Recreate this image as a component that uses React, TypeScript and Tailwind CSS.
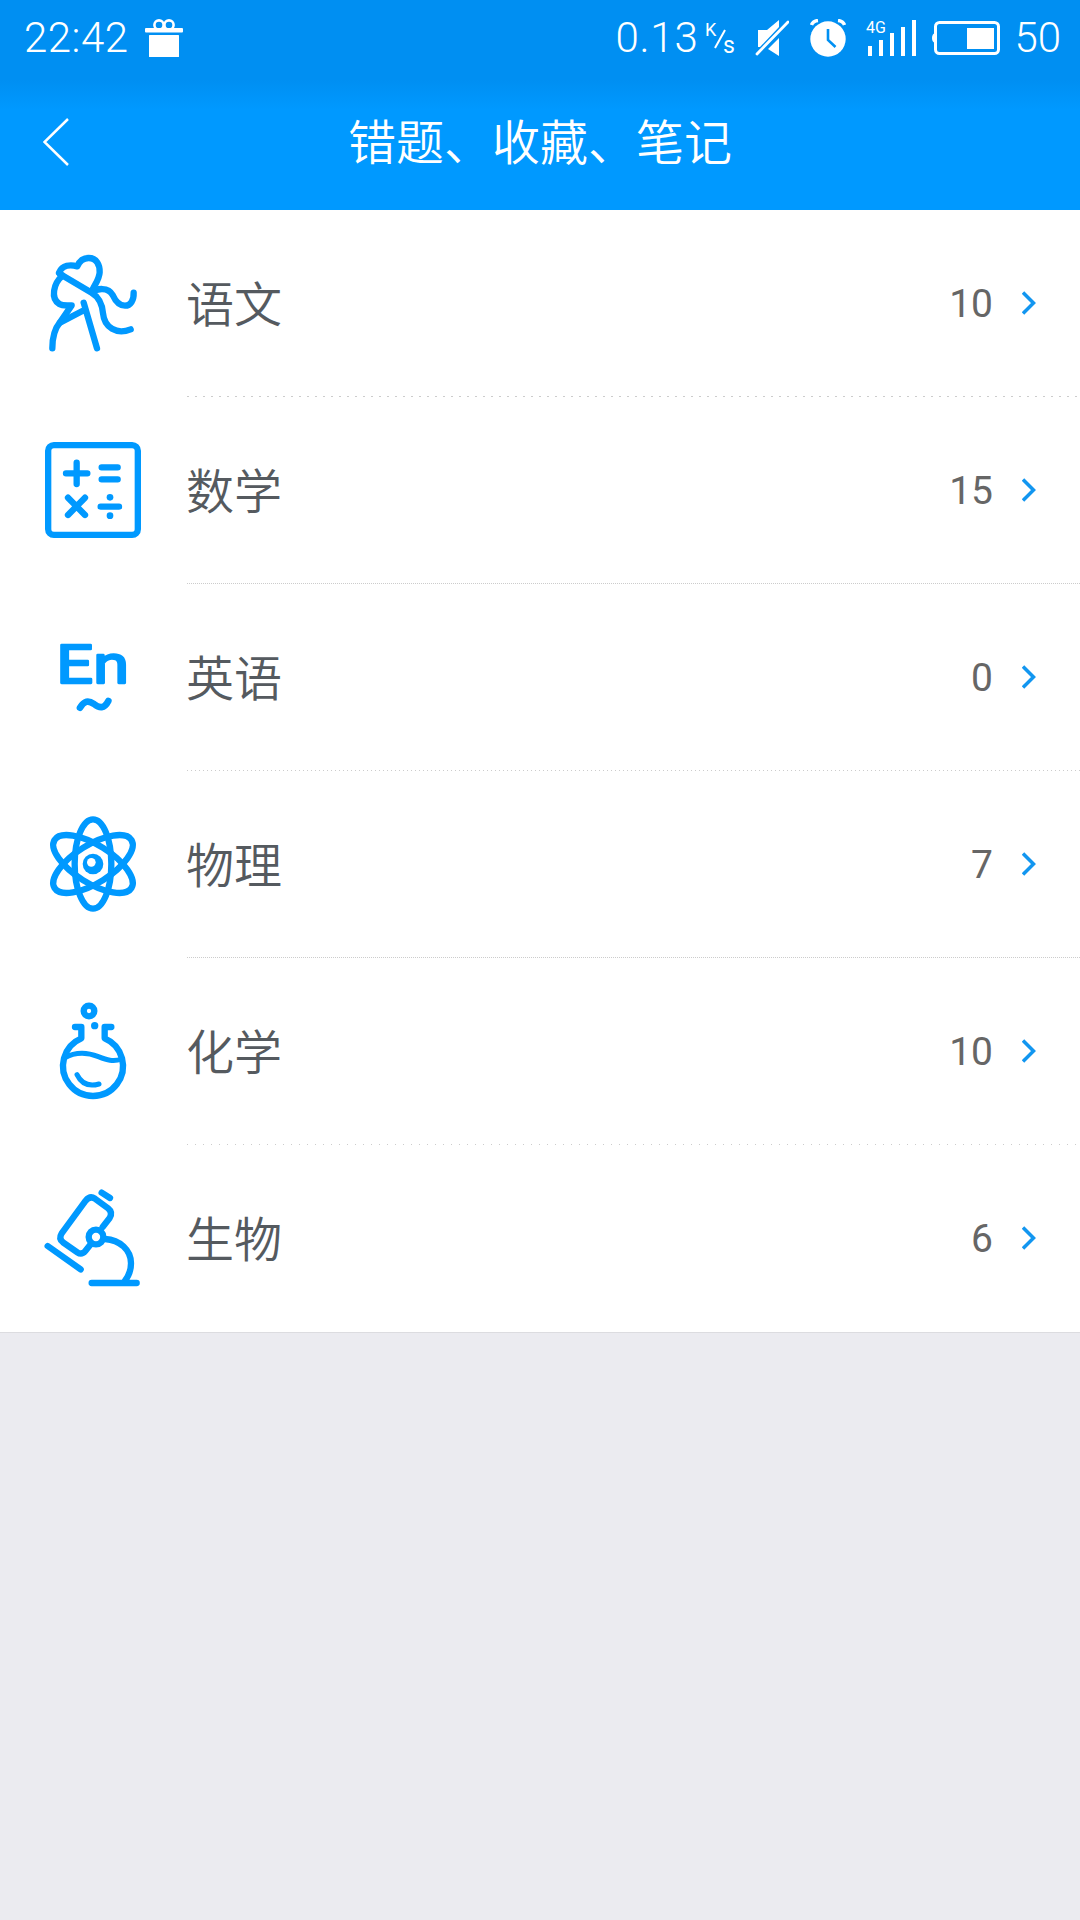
import type { ReactNode } from "react";

type Subject = {
  name: string;
  count: number;
  icon: ReactNode;
  divider: string;
};

const SubjectIcon = ({ children }: { children: ReactNode }) => (
  <svg
    viewBox="0 0 288 288"
    className="h-24 w-24 shrink-0 overflow-visible"
    fill="none"
    stroke="#0099ff"
    strokeWidth={19}
    strokeLinecap="round"
    strokeLinejoin="round"
  >
    {children}
  </svg>
);

const ChineseIcon = () => (
  <SubjectIcon>
    <path d="M42 53C52 30 76 28 97 34C105 15 118 9 131 9C155 9 165 30 164 52C163 72 150 88 143 103" />
    <path d="M45 57L140 113C165 128 172 150 174 175C178 218 215 240 257 223" />
    <path d="M140 112C155 100 190 95 203 120C212 140 222 152 240 152C257 152 267 135 266 113" />
    <path d="M53 62C25 85 16 130 43 147C53 153 68 151 80 151L45 202C30 220 22 250 22 280" />
    <path d="M45 203L118 165M116 143L156 280" />
  </SubjectIcon>
);

const MathIcon = () => (
  <SubjectIcon>
    <rect x="9.500" y="9.500" width="269" height="269" rx="17" />
    <path d="M63 94H127M95 62V126M170 76H218M170 112H218M69 167L120 219M120 167L69 219M167 194H222" />
    <g fill="#0099ff" stroke="none">
      <circle cx="195" cy="166" r="10" />
      <circle cx="195" cy="221" r="10" />
    </g>
  </SubjectIcon>
);

const EnglishIcon = () => (
  <SubjectIcon>
    <text
      x="34"
      y="161"
      textLength="218"
      lengthAdjust="spacingAndGlyphs"
      fill="#0099ff"
      strokeWidth={7}
      className="font-['Roboto',sans-serif] text-[162px] font-normal"
    >
      En
    </text>
    <path d="M105 236C118 215 130 213 147 225C163 238 178 240 190 216" strokeWidth={20} />
  </SubjectIcon>
);

const PhysicsIcon = () => (
  <SubjectIcon>
    <ellipse cx="144" cy="144" rx="55" ry="134" />
    <ellipse cx="144" cy="144" rx="57" ry="136" transform="rotate(58 144 144)" />
    <ellipse cx="144" cy="144" rx="57" ry="136" transform="rotate(-58 144 144)" />
    <circle cx="144" cy="144" r="31" fill="#0099ff" stroke="none" />
    <circle cx="139" cy="139" r="13" fill="#fff" stroke="none" />
  </SubjectIcon>
);

const ChemistryIcon = () => (
  <SubjectIcon>
    <circle cx="132" cy="24" r="16" />
    <circle cx="149" cy="68" r="11" fill="#0099ff" stroke="none" />
    <path d="M90 72H109V106A90 90 0 1 0 179 106V72H199" />
    <path d="M58 165C90 147 125 147 160 161C185 171 205 178 230 168M96 215C108 240 130 252 162 243" strokeWidth={15} />
  </SubjectIcon>
);

const BiologyIcon = () => (
  <SubjectIcon>
    <path d="M170 8L195 24" />
    <path d="M173 111L194 84Q204 67 189 55L150 26Q135 16 122 32L50 130Q40 146 54 157L97 187Q110 196 121 183L137 163" />
    <circle cx="153" cy="141" r="22" />
    <path d="M180 147C225 150 258 180 258 220C258 240 250 260 238 275M140 279H275M8 168L107 238" />
  </SubjectIcon>
);

// each separator has its own dot spacing
const subjects: Subject[] = [
  {
    name: "语文",
    count: 10,
    icon: <ChineseIcon />,
    divider: "bg-[repeating-linear-gradient(90deg,#ccc_0_2px,#fff_2px_8px)]",
  },
  {
    name: "数学",
    count: 15,
    icon: <MathIcon />,
    divider: "bg-[repeating-linear-gradient(90deg,#ccc_0_1px,#fff_1px_2px)]",
  },
  {
    name: "英语",
    count: 0,
    icon: <EnglishIcon />,
    divider: "bg-[repeating-linear-gradient(90deg,#ccc_0_1px,#fff_1px_4px)]",
  },
  {
    name: "物理",
    count: 7,
    icon: <PhysicsIcon />,
    divider: "bg-[repeating-linear-gradient(90deg,#ccc_0_1px,#fff_1px_2px)]",
  },
  {
    name: "化学",
    count: 10,
    icon: <ChemistryIcon />,
    divider: "bg-[repeating-linear-gradient(90deg,#ccc_0_1px,#fff_1px_8px)]",
  },
  { name: "生物", count: 6, icon: <BiologyIcon />, divider: "bg-transparent" },
];

const StatusBar = () => (
  <div className="flex h-[75px] items-center justify-between pr-[19px] pl-6 font-['Roboto',sans-serif] text-[42px] leading-none font-light">
    <div className="flex items-center">
      <span className="w-[121px] tracking-[0.5px]">22:42</span>
      <svg viewBox="0 0 38 38" className="h-[38px] w-[38px]" fill="currentColor">
        <g fill="none" stroke="currentColor" strokeWidth="2.6">
          <circle cx="14" cy="6" r="4.600" />
          <circle cx="24" cy="6" r="4.600" />
        </g>
        <rect y="9" width="38" height="4.4" rx="1" />
        <rect x="4" y="16" width="30" height="22" rx="0.5" />
      </svg>
    </div>

    <div className="flex items-center">
      <span className="w-[90px] tracking-[0.8px]">0.13</span>
      {/* Network speed unit */}
      <svg viewBox="0 0 30 34" className="h-[34px] w-[30px] overflow-visible" fill="currentColor">
        <text x="0" y="15" className="text-[18px] font-normal">K</text>
        <path d="M20 9L10 27" stroke="currentColor" strokeWidth="2" />
        <text x="18" y="32" className="text-[23px] font-normal">s</text>
      </svg>
      {/* Muted speaker */}
      <svg viewBox="0 0 34 36" className="ml-5 h-9 w-[34px]" fill="currentColor">
        <path d="M3 10H12L24 0V7L5 27H3ZM24 18V36L13 29Z" />
        <path d="M2 34L33 2" stroke="currentColor" strokeWidth="2.8" strokeLinecap="round" />
      </svg>
      {/* Alarm */}
      <svg viewBox="0 0 36 38" className="ml-[21px] h-[38px] w-9">
        <circle cx="18" cy="20" r="17.7" fill="currentColor" />
        <path d="M1.5 6Q3 2 8 1.5M34.5 6Q33 2 28 1.5" stroke="currentColor" strokeWidth="3.5" fill="none" />
        <path d="M18 10V21L25.500 28" stroke="#0090f3" strokeWidth="2.6" fill="none" />
      </svg>
      {/* Signal */}
      <svg viewBox="0 0 50 36" className="ml-5 h-9 w-[50px] overflow-visible" fill="currentColor">
        <text x="0" y="13" className="text-[16px] font-normal">4G</text>
        <rect x="2" y="26" width="4" height="10" />
        <rect x="13" y="20" width="4" height="16" />
        <rect x="24" y="13" width="4" height="23" />
        <rect x="35" y="7" width="4" height="29" />
        <rect x="46" width="4" height="36" />
      </svg>
      {/* Battery */}
      <svg viewBox="0 0 68 34" className="mr-3.5 ml-4 h-[34px] w-[68px]" fill="currentColor">
        <rect x="3.500" y="1.500" width="63" height="31" rx="4" fill="none" stroke="currentColor" strokeWidth="3" />
        <path d="M3 12Q0 13 0 17T3 22Z" />
        <rect x="35" y="7" width="27" height="21" />
      </svg>
      <span>50</span>
    </div>
  </div>
);

export default function App() {
  return (
    <div className="flex min-h-[1920px] w-[1080px] flex-col bg-[#ebebf0] font-['Noto_Sans_CJK_SC',sans-serif]">
      <header className="h-[210px] bg-[linear-gradient(#008ff2_0_80px,#0099ff_110px)] text-white">
        <StatusBar />
        <div className="grid h-[135px] grid-cols-[120px_1fr_120px] items-center">
          <svg
            viewBox="0 0 26 48"
            className="mb-0.5 ml-[43px] h-12 w-[26px]"
            fill="none"
            stroke="currentColor"
            strokeWidth="2.5"
          >
            <path d="M25 1L1.500 24L25 47" />
          </svg>
          <h1 className="pb-[7px] text-center text-5xl font-[350]">错题、收藏、笔记</h1>
        </div>
      </header>

      <ul className="border-b border-[#dcdce0] bg-white">
        {subjects.map(({ name, count, icon, divider }) => (
          <li key={name}>
            <div className="flex h-[186px] items-center pr-[44px] pl-[45px]">
              {icon}
              <span className="ml-[45px] flex-1 pb-[5px] text-5xl font-[350] text-[#555a5f]">{name}</span>
              <span className="pt-[3px] font-['Roboto',sans-serif] text-[39px] font-normal text-[#666]">{count}</span>
              <svg
                viewBox="0 0 14 24"
                className="ml-[29px] h-6 w-3.5"
                fill="none"
                stroke="#1296f0"
                strokeWidth="3.5"
              >
                <path d="M1 1.500L11.500 12L1 22.500" />
              </svg>
            </div>
            <div className={`ml-[187px] h-px ${divider}`} />
          </li>
        ))}
      </ul>
    </div>
  );
}
